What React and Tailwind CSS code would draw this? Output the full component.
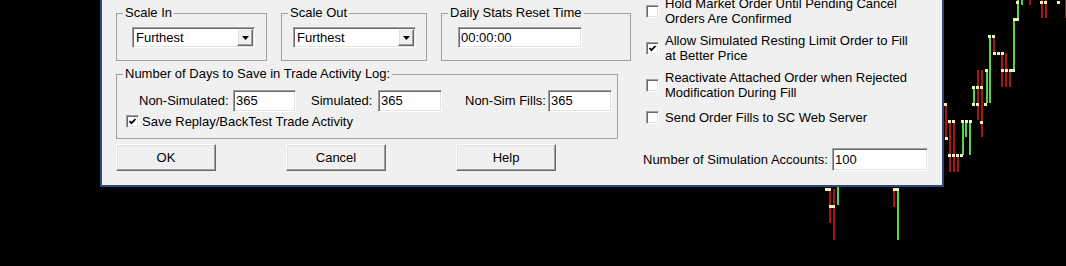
import React from "react";

const sunken =
  "border border-t-[#a0a0a0] border-l-[#a0a0a0] border-b-white border-r-white shadow-[inset_1px_1px_0_#696969,inset_-1px_-1px_0_#e3e3e3]";
const raised =
  "border border-t-white border-l-white border-b-[#696969] border-r-[#696969] shadow-[inset_-1px_-1px_0_#a0a0a0,inset_1px_1px_0_#e3e3e3]";

// chart bars [x, y1, y2, color]
const bars = [
  [1017, 0, 20, "g"], [1021, 0, 5, "g"], [1029, 0, 5, "r"], [1041, 0, 18, "r"],
  [1045, 0, 18, "r"], [1065, 0, 18, "r"], [989, 36, 103, "g"], [993, 36, 53, "r"],
  [1001, 53, 87, "r"], [1005, 53, 87, "r"], [1009, 70, 87, "r"], [1013, 19, 70, "g"],
  [986, 70, 103, "g"], [977, 70, 120, "r"], [981, 70, 137, "r"], [973, 87, 105, "g"],
  [945, 104, 137, "r"], [949, 121, 172, "r"], [953, 121, 172, "r"], [957, 155, 172, "r"],
  [962, 121, 155, "g"], [965, 121, 137, "g"], [969, 121, 155, "g"],
  [829, 189, 223, "r"], [833, 189, 240, "r"], [837, 187, 205, "g"],
  [893, 189, 207, "r"], [897, 189, 240, "g"],
];

const dots = [
  [1017, 2], [1014, 19], [1017, 19], [1041, 2], [1045, 2], [1058, 2],
  [989, 36], [993, 36], [994, 53], [998, 53], [1002, 53], [1002, 70], [1006, 70],
  [1010, 70], [1013, 70], [986, 70], [973, 87], [977, 87], [981, 87], [973, 104],
  [977, 104], [985, 104], [945, 104], [949, 121], [953, 121], [962, 121], [966, 121],
  [970, 121], [981, 122], [946, 138], [949, 155], [953, 155], [957, 155], [961, 155],
  [826, 189], [829, 189], [830, 206], [833, 206], [894, 189], [897, 189],
];

const Chart = () => (
  <svg className="absolute left-0 top-0" width="1066" height="266">
    {bars.map(([x, y1, y2, c], i) => (
      <rect key={i} x={x} y={y1} width="2" height={y2 - y1} fill={c === "g" ? "#4fd84f" : "#a81414"} />
    ))}
    {dots.map(([x, y], i) => (
      <rect key={i} x={x - 1} y={y - 1} width="3" height="3" fill="#eef4b4" />
    ))}
  </svg>
);

const Edit = ({ value, className }) => (
  <div className={`flex items-center bg-white pl-[2px] ${sunken} ${className}`}>{value}</div>
);

const Combo = ({ value, className }) => (
  <div className={`flex h-[21px] w-[123px] items-center justify-between bg-white p-[1px] ${sunken} ${className}`}>
    <span className="pl-[2px]">{value}</span>
    <div className={`flex h-[17px] w-[16px] items-center justify-center bg-[#f0f0f0] ${raised}`}>
      <svg width="7" height="4" viewBox="0 0 7 4">
        <path d="M0 0h7L3.5 4z" fill="#000" />
      </svg>
    </div>
  </div>
);

const Check = ({ checked }) => (
  <div className={`flex h-[13px] w-[13px] shrink-0 items-center justify-center bg-white ${sunken}`}>
    {checked && (
      <svg width="9" height="9" viewBox="0 0 9 9">
        <polyline points="1.5,4 3.5,6.2 7.5,2" stroke="#000" strokeWidth="1.8" fill="none" />
      </svg>
    )}
  </div>
);

const Group = ({ label, className, children }) => (
  <fieldset className={`border border-[#a0a0a0] ${className}`}>
    <legend className="ml-[6px] px-[2px] leading-[14px]">{label}</legend>
    {children}
  </fieldset>
);

const Btn = ({ children, className }) => (
  <button className={`h-[27px] w-[100px] bg-[#f0f0f0] ${raised} ${className}`}>{children}</button>
);

const Option = ({ checked, lines, className }) => (
  <div className={`flex items-center pl-[3px] ${className}`}>
    <Check checked={checked} />
    <div className="ml-[6px] leading-[15px]">
      {lines.map((l) => (
        <div key={l}>{l}</div>
      ))}
    </div>
  </div>
);

export default function App() {
  return (
    <div className="relative h-[266px] w-[1066px] overflow-hidden bg-black font-['Liberation_Sans',Arial,sans-serif] text-[13px] text-black">
      <Chart />
      <div className="relative ml-[100px] flex h-[187px] w-[844px] border-x-2 border-b-2 border-[#2b4a78] bg-[#f0f0f0] pl-[14px]">
        <div className="flex w-[515px] flex-col">
          <div className="mt-[6px] flex">
            <Group label="Scale In" className="h-[55px] w-[151px]">
              <Combo value="Furthest" className="ml-[15px] mt-[7px]" />
            </Group>
            <Group label="Scale Out" className="ml-[14px] h-[55px] w-[146px]">
              <Combo value="Furthest" className="ml-[11px] mt-[7px]" />
            </Group>
            <Group label="Daily Stats Reset Time" className="ml-[14px] h-[55px] w-[190px]">
              <Edit value="00:00:00" className="ml-[16px] mt-[7px] h-[21px] w-[124px]" />
            </Group>
          </div>
          <Group label="Number of Days to Save in Trade Activity Log:" className="mt-[6px] h-[72px] w-[502px]">
            <div className="mt-[9px] flex items-center">
              <span className="ml-[22px] w-[94px]">Non-Simulated:</span>
              <Edit value="365" className="h-[22px] w-[63px]" />
              <span className="ml-[15px] w-[67px]">Simulated:</span>
              <Edit value="365" className="h-[22px] w-[64px]" />
              <span className="ml-[23px] w-[83px]">Non-Sim Fills:</span>
              <Edit value="365" className="h-[22px] w-[64px]" />
            </div>
            <div className="ml-[9px] mt-[2px] flex h-[15px] items-center">
              <Check checked />
              <span className="ml-[3px]">Save Replay/BackTest Trade Activity</span>
            </div>
          </Group>
          <div className="mt-[5px] flex">
            <Btn>OK</Btn>
            <Btn className="ml-[70px]">Cancel</Btn>
            <Btn className="ml-[70px]">Help</Btn>
          </div>
        </div>
        <div className="ml-[12px] flex w-[298px] flex-col">
          <Option className="-mt-[4px]" lines={["Hold Market Order Until Pending Cancel", "Orders Are Confirmed"]} />
          <Option className="mt-[7px]" checked lines={["Allow Simulated Resting Limit Order to Fill", "at Better Price"]} />
          <Option className="mt-[7px]" lines={["Reactivate Attached Order when Rejected", "Modification During Fill"]} />
          <Option className="mt-[10px]" lines={["Send Order Fills to SC Web Server"]} />
          <div className="mt-[23px] flex items-center">
            <span className="w-[189px]">Number of Simulation Accounts:</span>
            <Edit value="100" className="h-[23px] w-[96px]" />
          </div>
        </div>
      </div>
    </div>
  );
}
